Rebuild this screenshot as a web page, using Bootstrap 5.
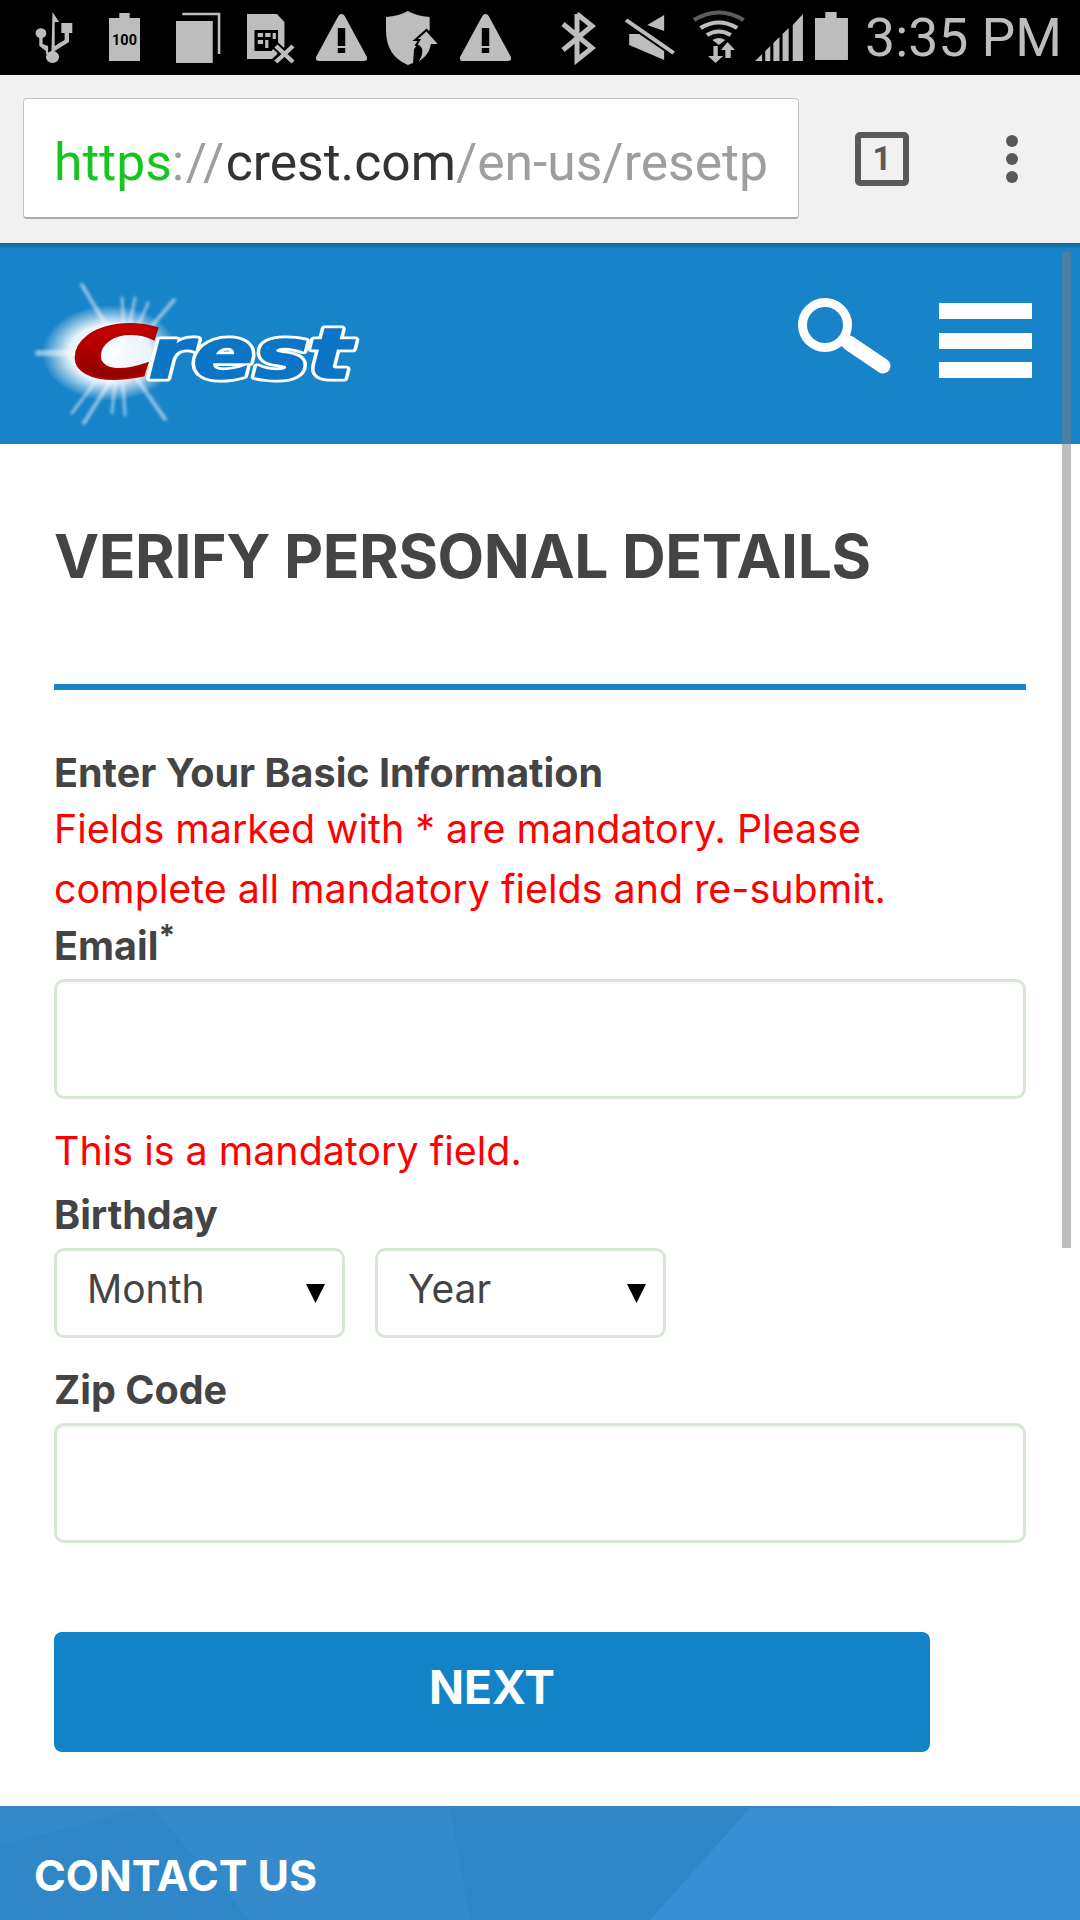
<!DOCTYPE html>
<html lang="en">
<head>
  <meta charset="UTF-8" />
  <meta name="viewport" content="width=device-width, initial-scale=1.0"/>
  <title>Crest - Verify Personal Details</title>
  <link href="https://cdn.jsdelivr.net/npm/bootstrap@5.3.0/dist/css/bootstrap.min.css" rel="stylesheet"/>
  <style>
    body { width: 1080px; height: 1920px; overflow: hidden; background: #fff; font-family: Inter, "Liberation Sans", sans-serif; color: #444; }
    .status-strip { height: 75px; background: #000; color: #bdbdbd; font-family: Roboto, sans-serif; font-size: 53.5px; line-height: 75px; padding-right: 18px; white-space: nowrap; }
    .status-strip svg { display: block; flex-shrink: 0; }
    .browser-strip { height: 168px; background: #f1f1f1; padding: 23px 0 0 23px; }
    .url-box { flex: 0 0 776px; height: 121px; background: #fff; border: 1px solid #c4c4c4; border-bottom: 2px solid #aaa; border-radius: 4px; padding-left: 30px; font-family: Roboto, sans-serif; font-size: 51.6px; line-height: 128px; color: #9e9e9e; white-space: nowrap; overflow: hidden; }
    .url-https { color: #16c61f; }
    .url-sep { letter-spacing: 1.5px; }
    .url-host { color: #333; }
    .tab-count { flex: 0 0 54px; height: 54px; margin-left: 56px; margin-top: 34px; border: 6px solid #595959; border-radius: 5px; color: #595959; font: 700 33px/42px Roboto, sans-serif; text-align: center; }
    .dots-menu { margin-left: 97px; margin-top: 37px; display: flex; flex-direction: column; gap: 6px; }
    .dots-menu span { width: 12px; height: 12px; border-radius: 50%; background: #595959; }
    .site-head { height: 201px; background: linear-gradient(#0f6599, #1783c8 6px); }
    .scroll-thumb { position: absolute; left: 1062px; top: 252px; width: 9px; height: 996px; background: rgba(125,125,125,.5); }
    .form-area { padding: 0 54px; }
    .page-title { margin: 77px 0 0; padding-bottom: 93px; border-bottom: 6px solid #1783c8; font: 700 60.5px/70px Inter, sans-serif; letter-spacing: -.4px; color: #444; }
    .sec-label { font: 700 39.5px/50px Inter, sans-serif; color: #444; margin: 0; }
    .intro-label { margin-top: 58px; }
    .email-label { margin-top: 2px; }
    .birth-label { margin-top: 9px; }
    .zip-label { margin-top: 27px; }
    .err-text { font: 400 39.4px/60px Inter, sans-serif; color: #f00; margin: 0; }
    .intro-err { margin-top: 1px; }
    .err-gap { margin-top: 22px; }
    .req-star { font-weight: 700; font-size: 30px; position: relative; top: -14px; line-height: 0; }
    .field-box { height: 120px; margin-top: 8px; border: 3px solid #d6e8d3; border-radius: 10px; background: #fff; box-shadow: inset 0 2px 2px rgba(0,0,0,.04); }
    .date-row { gap: 30px; margin-top: 8px; }
    .date-pick { width: 291px; height: 90px; border: 3px solid #d6e8d3; border-radius: 10px; padding: 0 0 10px 30px; font: 400 39px/1 Inter, sans-serif; color: #444; background-position: right 17px center; background-size: 19px 19px; background-image: url("data:image/svg+xml,%3Csvg xmlns='http://www.w3.org/2000/svg' viewBox='0 0 19 19'%3E%3Cpath d='M0 0h19L9.5 19z'/%3E%3C/svg%3E"); }
    .next-btn { width: 876px; height: 120px; margin-top: 89px; border: 0; border-radius: 8px; background: #1283c7; color: #fff; font: 700 46px/1 Inter, sans-serif; padding-bottom: 16px; }
    .foot-strip { position: relative; margin-top: 54px; height: 114px; overflow: hidden; background: #348aca; color: #fff; padding: 44px 0 0 34px; font: 700 43px/50px Inter, sans-serif; }
    .foot-strip svg { position: absolute; left: 0; top: 0; }
    .foot-strip span { position: relative; }
  </style>
</head>
<body class="position-relative">
  <div class="status-strip d-flex justify-content-between">
    <svg width="860" height="75" viewBox="0 0 860 75" fill="#bdbdbd">
      <!-- usb -->
      <g transform="translate(36 0) scale(1.1 1) translate(-36 0)">
        <path d="M51 12l6 10h-4v24l9-6v-7h-3V23h10v10h-3v9l-13 9v3h-3z M47 46v8h-2v-3l-6-5v-8a5 5 0 1 1 3 0v6z"/>
        <circle cx="51" cy="57" r="6"/>
      </g>
      <!-- battery 100 -->
      <g transform="translate(109 0) scale(1.033 1) translate(-106 0)">
        <path d="M106 18h10v-5h10v5h10v43h-30z"/>
        <text x="121" y="45" text-anchor="middle" font-family="Roboto" font-weight="700" font-size="14" fill="#000">100</text>
      </g>
      <!-- copies -->
      <g transform="translate(176 0) scale(1.05 1) translate(-170 0)">
        <path d="M170 21h35v42h-35z"/>
        <path d="M176 14h35v40" fill="none" stroke="#bdbdbd" stroke-width="2.5"/>
      </g>
      <!-- sim -->
      <g transform="translate(247 0) scale(1.07 1) translate(-239 0)">
        <path d="M239 14h28l7 8v25l-7 7v5h-28z"/>
        <path d="M246 30h22v13l-6 8h-16z" fill="#000"/>
        <path d="M249 33h5v4h-5z M256 33h5v4h-5z M249 40h5v4h-5z M256 40h3v8h-3z M263 33h3v6h-3z" fill="#bdbdbd"/>
        <path d="M265 45l17 17M282 45l-17 17" stroke="#000" stroke-width="8"/>
        <path d="M266 46l16 16M282 46l-16 16" stroke="#bdbdbd" stroke-width="4"/>
      </g>
      <!-- warning -->
      <g transform="translate(315 0) scale(1.06 1) translate(-305 0)">
        <path d="M330 14q2 0 3 2l21 41q1 4-3 4h-42q-4 0-3-4l21-41q1-2 3-2z"/>
        <path d="M326.500 28h7v18h-7z M326.500 48h7v5h-7z" fill="#000"/>
      </g>
      <!-- shield -->
      <g transform="translate(386 0) scale(1.04 1) translate(-374 0)">
        <path d="M395 11q8 5 21 6v13l-15 19 -1 14-5 2q-21-9-21-35v-13q13-1 21-6z"/>
        <path d="M413 30l13 15h-8q-2 13-17 20q7-7 7-14q0-4-5-6l3-5-4 0z" stroke="#000" stroke-width="2"/>
      </g>
      <!-- warning -->
      <g transform="translate(459 0) scale(1.06 1) translate(-444 0)">
        <path d="M469 14q2 0 3 2l21 41q1 4-3 4h-42q-4 0-3-4l21-41q1-2 3-2z"/>
        <path d="M465.500 28h7v18h-7z M465.500 48h7v5h-7z" fill="#000"/>
      </g>
      <!-- bluetooth -->
      <path d="M577 14v46l15-12-29-24M577 14l15 12-29 24" fill="none" stroke="#bdbdbd" stroke-width="5"/>
      <!-- mute -->
      <g transform="translate(626 0) scale(1.06 1) translate(-624 0)">
        <path d="M660 15v16l-16-6z M627 34h12l21 15v11l-33-15z"/>
        <path d="M625 20l44 32" stroke="#000" stroke-width="9"/>
        <path d="M624 20l45 33" stroke="#bdbdbd" stroke-width="4"/>
      </g>
      <!-- wifi -->
      <g transform="translate(694 0) scale(1.08 1) translate(-691 0)">
        <path d="M691 20q23-15 46 0" fill="none" stroke="#5c5c5c" stroke-width="4"/>
        <path d="M697 28q17-11 34 0M703 35q11-7 22 0" fill="none" stroke="#bdbdbd" stroke-width="4"/>
        <path d="M708 40q6-4 12 0l-6 5z"/>
        <path d="M709 46h4v10h5l-7 7-7-7h5z M722 42l7 8h-4v8h-5v-8h-4z"/>
      </g>
      <!-- signal -->
      <g transform="translate(755 0) scale(1.02 1) translate(-748 0)">
        <path d="M748 61l7-7v7z M758 51l5-5v15h-5z M766 43l6-6v24h-6z M775 34l6-6v33h-6z M785 25l10-11v47h-10z"/>
      </g>
      <!-- battery -->
      <g transform="translate(815 0) scale(1.03 1) translate(-806 0)">
        <path d="M806 18h10v-6h11v6h11v42h-32z"/>
      </g>
    </svg>
    <span>3:35 PM</span>
  </div>

  <div class="browser-strip d-flex align-items-start">
    <div class="url-box"><span class="url-https">https</span><span class="url-sep">://</span><span class="url-host">crest.com</span>/en-us/resetp</div>
    <div class="tab-count">1</div>
    <div class="dots-menu"><span></span><span></span><span></span></div>
  </div>

  <header class="site-head position-relative">
    <svg class="position-absolute top-0 start-0" width="400" height="201" viewBox="0 0 400 201">
      <defs>
        <radialGradient id="glowFill">
          <stop offset="0" stop-color="#fff"/>
          <stop offset=".6" stop-color="#fff" stop-opacity=".9"/>
          <stop offset="1" stop-color="#fff" stop-opacity="0"/>
        </radialGradient>
        <linearGradient id="redFill" x1="0" y1="0" x2="0" y2="1">
          <stop offset="0" stop-color="#d90000"/>
          <stop offset="1" stop-color="#7c0808"/>
        </linearGradient>
        <filter id="softEdge"><feGaussianBlur stdDeviation="1.6"/></filter>
        <filter id="softLogo"><feGaussianBlur stdDeviation=".5"/></filter>
      </defs>
      <ellipse cx="110" cy="110" rx="68" ry="48" fill="url(#glowFill)"/>
      <g stroke="#fff" stroke-opacity=".5" stroke-linecap="round" filter="url(#softEdge)">
        <path d="M82 42l30 50M174 57l-34 40M84 180l30-48M165 176l-28-40" stroke-width="4"/>
        <path d="M122 55l2 30M135 55l-6 30M148 60l-12 28M112 170l3-30M125 172l-2-30M72 170l30-40" stroke-width="3"/>
        <path d="M38 110h50" stroke-width="6"/>
      </g>
      <g filter="url(#softLogo)" font-family="DejaVu Sans, sans-serif" font-style="italic" font-weight="700">
        <text x="148" y="135" font-size="70" fill="#0a74c6" stroke="#fff" stroke-width="7" stroke-linejoin="round" textLength="204" lengthAdjust="spacingAndGlyphs">rest</text>
        <text x="148" y="135" font-size="70" fill="#0a74c6" stroke="#0a74c6" stroke-width="1.500" textLength="204" lengthAdjust="spacingAndGlyphs">rest</text>
        <text x="72" y="135" font-size="73" fill="url(#redFill)" stroke="#b00000" stroke-width="2" textLength="86" lengthAdjust="spacingAndGlyphs">C</text>
      </g>
    </svg>
    <svg class="position-absolute top-0 end-0" width="300" height="201" viewBox="780 243 300 201" fill="none" stroke="#fff">
      <circle cx="825" cy="325" r="22.5" stroke-width="9"/>
      <path d="M849 343l34 23" stroke-width="15" stroke-linecap="round"/>
      <path d="M939 311h93M939 341h93M939 370h93" stroke-width="16"/>
    </svg>
  </header>
  <div class="scroll-thumb"></div>

  <main class="form-area">
    <h1 class="page-title">VERIFY PERSONAL DETAILS</h1>
    <form>
      <p class="sec-label intro-label">Enter Your Basic Information</p>
      <p class="err-text intro-err">Fields marked with * are mandatory. Please complete all mandatory fields and re-submit.</p>
      <label class="sec-label email-label d-block" for="emailField">Email<span class="req-star">*</span></label>
      <input id="emailField" class="form-control field-box" type="text">
      <p class="err-text err-gap">This is a mandatory field.</p>
      <p class="sec-label birth-label">Birthday</p>
      <div class="d-flex date-row">
        <select class="form-select date-pick" aria-label="Month"><option>Month</option></select>
        <select class="form-select date-pick" aria-label="Year"><option>Year</option></select>
      </div>
      <label class="sec-label zip-label d-block" for="zipField">Zip Code</label>
      <input id="zipField" class="form-control field-box" type="text">
      <button class="btn next-btn d-block" type="button">NEXT</button>
    </form>
  </main>

  <footer class="foot-strip">
    <svg width="1080" height="114" viewBox="0 0 1080 114">
      <path d="M150 0l100 114H0V40z" fill="#3087c8"/>
      <path d="M450 0h300l-50 60-40 54H470z" fill="#3086c7"/>
      <path d="M750 2l330-2v114H650z" fill="#388fd1"/>
    </svg>
    <span>CONTACT US</span>
  </footer>
</body>
</html>
